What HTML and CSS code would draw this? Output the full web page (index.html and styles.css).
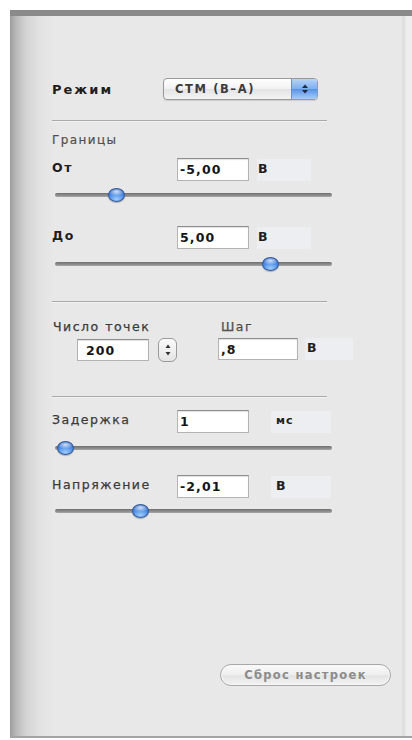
FILE: index.html
```html
<!DOCTYPE html>
<html lang="ru">
<head>
<meta charset="utf-8">
<title>Настройки развёртки</title>
<link rel="stylesheet" href="styles.css">
</head>
<body>
<div class="panel">
  <div class="content">
    <div class="mode-row">
      <span class="label strong">Режим</span>
      <div class="popup">
        <span class="popup-text">СТМ (В–А)</span>
        <span class="popup-arrows">
          <svg width="8" height="12" viewBox="0 0 8 12"><path d="M4 1.5 L7 5 L1 5 Z" fill="#1d2a44"/><path d="M4 10.5 L7 7 L1 7 Z" fill="#1d2a44"/></svg>
        </span>
      </div>
    </div>

    <div class="sep sep-mode"></div>

    <div class="group-title">Границы</div>

    <div class="field-row row-from">
      <span class="label strong">От</span>
      <div class="input">-5,00</div>
      <span class="unit unit-v">В</span>
    </div>
    <div class="slider slider-from"><div class="track"></div><div class="thumb" style="left:22%"></div></div>

    <div class="field-row row-to">
      <span class="label strong">До</span>
      <div class="input">5,00</div>
      <span class="unit unit-v">В</span>
    </div>
    <div class="slider slider-to"><div class="track"></div><div class="thumb" style="left:77.6%"></div></div>

    <div class="sep sep-points"></div>

    <div class="points">
      <div class="points-col count-col">
        <span class="label">Число точек</span>
        <div class="points-inputs">
          <div class="input input-count">200</div>
          <div class="stepper">
            <svg width="8" height="16" viewBox="0 0 8 16"><path d="M4 2.5 L6.5 6 L1.5 6 Z" fill="#333"/><path d="M4 13.5 L6.5 10 L1.5 10 Z" fill="#333"/></svg>
          </div>
        </div>
      </div>
      <div class="points-col step-col">
        <span class="label">Шаг</span>
        <div class="points-inputs">
          <div class="input input-step">,8</div>
          <span class="unit unit-step">В</span>
        </div>
      </div>
    </div>

    <div class="sep sep-delay"></div>

    <div class="field-row row-delay">
      <span class="label">Задержка</span>
      <div class="input">1</div>
      <span class="unit unit-wide">мс</span>
    </div>
    <div class="slider slider-delay"><div class="track"></div><div class="thumb" style="left:3.6%"></div></div>

    <div class="field-row row-volt">
      <span class="label">Напряжение</span>
      <div class="input">-2,01</div>
      <span class="unit unit-wide">В</span>
    </div>
    <div class="slider slider-volt"><div class="track"></div><div class="thumb" style="left:30.7%"></div></div>

    <div class="footer">
      <button class="reset" type="button">Сброс настроек</button>
    </div>
  </div>
</div>
</body>
</html>
```

FILE: styles.css
```css
html, body {
  margin: 0;
  padding: 0;
  background: #ffffff;
}

body {
  font-family: "DejaVu Sans", Verdana, sans-serif;
  color: #222;
}

/* window-like sheet with a dark top rim and shaded left edge */
.panel {
  margin: 10px 0 0 10px;
  height: 728px;
  box-sizing: border-box;
  border-top: 6px solid #8a8a8a;
  border-bottom: 2px solid #a4a4a4;
  background:
    linear-gradient(to right, rgba(0,0,0,0) 0, rgba(0,0,0,0) 392px, rgba(0,0,0,0.05) 393px, rgba(0,0,0,0.02) 395px, rgba(255,255,255,0.25) 396px),
    linear-gradient(to right, #9c9c9c 0, #b9b9b9 6px, #d4d4d4 16px, #e2e2e2 30px, #e8e8e8 44px);
  background-color: #e8e8e8;
  display: flex;
  flex-direction: column;
}

.content {
  flex: 1;
  display: flex;
  flex-direction: column;
  padding: 62px 0 50px 42px;
}

.label {
  font-size: 12.5px;
  letter-spacing: 1.5px;
  color: #3a3a3a;
  white-space: nowrap;
  -webkit-text-stroke: 0.25px #3a3a3a;
}

.label.strong {
  font-weight: bold;
  font-size: 12.5px;
  letter-spacing: 1.5px;
  color: #1e1e1e;
  -webkit-text-stroke: 0;
}

/* mode popup */
.mode-row {
  display: flex;
  align-items: center;
  height: 22px;
}

.mode-row .label {
  width: 111px;
  font-size: 13px;
  letter-spacing: 2px;
}

.popup {
  width: 155px;
  height: 22px;
  box-sizing: border-box;
  border: 1px solid #9a9a9a;
  border-radius: 4px;
  background: linear-gradient(#ffffff, #f1f1f1 50%, #e3e3e3 51%, #f4f4f4);
  display: flex;
  align-items: center;
  overflow: hidden;
  box-shadow: 0 1px 1px rgba(0,0,0,0.12);
}

.popup-text {
  flex: 1;
  padding-left: 11px;
  font-size: 11.5px;
  font-weight: bold;
  letter-spacing: 1.6px;
  color: #3c3c3c;
}

.popup-arrows {
  width: 25px;
  height: 100%;
  display: flex;
  align-items: center;
  justify-content: center;
  border-left: 1px solid #6c8fc4;
  background: linear-gradient(#b6d3f6, #7fb0ee 48%, #5a94e6 52%, #a7cdf8);
}

/* separators */
.sep {
  width: 275px;
  height: 1px;
  background: #a9a9a9;
  border-bottom: 1px solid #f3f3f3;
}

.sep-mode { margin-top: 20px; }
.sep-points { margin-top: 29px; }
.sep-delay { margin-top: 34px; }

.group-title {
  margin-top: 11px;
  font-size: 12px;
  letter-spacing: 1.4px;
  color: #505050;
  line-height: 15px;
  -webkit-text-stroke: 0.2px #505050;
}

/* label / field / unit rows */
.field-row {
  display: grid;
  grid-template-columns: 125px 72px auto;
  align-items: center;
  height: 23px;
}

.field-row .label { align-self: start; padding-top: 2px; }

.row-from { margin-top: 10px; }
.row-to { margin-top: 23px; }
.row-delay { margin-top: 12px; }
.row-volt { margin-top: 19px; }

.input {
  height: 23px;
  box-sizing: border-box;
  background: #ffffff;
  border: 1px solid #b4b4b4;
  border-top-color: #8d8d8d;
  box-shadow: inset 0 1px 1px rgba(0,0,0,0.12);
  padding: 0 0 0 2px;
  font-size: 12.5px;
  font-weight: bold;
  letter-spacing: 1.1px;
  line-height: 21px;
  color: #151515;
}

.unit {
  height: 22px;
  box-sizing: border-box;
  background: #eceef2;
  font-size: 12.5px;
  font-weight: bold;
  color: #1e1e1e;
  line-height: 20px;
  letter-spacing: 1px;
}

.unit-v { width: 54px; margin-left: 8px; padding-left: 1px; }
.unit-wide { width: 60px; margin-left: 22px; padding-left: 5px; }
.row-delay .unit-wide { font-size: 11px; }
.unit-step { width: 48px; margin-left: 7px; padding-left: 2px; }

/* horizontal sliders */
.slider {
  position: relative;
  width: 277px;
  height: 16px;
  margin-left: 3px;
}

.slider-from { margin-top: 6px; }
.slider-to { margin-top: 7px; }
.slider-delay { margin-top: 7px; }
.slider-volt { margin-top: 5px; }

.track {
  position: absolute;
  left: 0;
  right: 0;
  top: 6px;
  height: 4px;
  border-radius: 2px;
  background: linear-gradient(#6f6f6f, #8e8e8e 60%, #a8a8a8);
}

.thumb {
  position: absolute;
  top: 1px;
  width: 17px;
  height: 14px;
  margin-left: -8px;
  box-sizing: border-box;
  border-radius: 50%;
  border: 1px solid #33599c;
  background:
    radial-gradient(ellipse 60% 35% at 50% 22%, rgba(255,255,255,0.8), rgba(255,255,255,0) 100%),
    radial-gradient(ellipse 80% 70% at 50% 85%, #a0cdfb, #468ae6 70%, #2762c4);
  box-shadow: 0 1px 1px rgba(0,0,0,0.25);
}

/* point count and step */
.points {
  margin-top: 16px;
  display: flex;
}

.points-col {
  display: flex;
  flex-direction: column;
}

.count-col { width: 166px; }

.points-col .label { line-height: 15px; padding-left: 1px; }

.points-inputs {
  margin-top: 4px;
  display: flex;
  align-items: center;
}

.input-count {
  width: 72px;
  margin-left: 25px;
  height: 22px;
  padding-left: 8px;
}

.stepper {
  margin-left: 9px;
  width: 19px;
  height: 24px;
  box-sizing: border-box;
  border: 1px solid #9a9a9a;
  border-radius: 6px;
  background: linear-gradient(#fbfbfb, #e4e4e4);
  display: flex;
  align-items: center;
  justify-content: center;
}

.step-col .label { color: #555; padding-left: 3px; }

.input-step {
  width: 80px;
  height: 22px;
}

/* bottom action */
.footer {
  margin-top: auto;
  display: flex;
  padding-left: 168px;
}

.reset {
  width: 171px;
  height: 22px;
  border: 1px solid #a9a9a9;
  border-radius: 11px;
  background: linear-gradient(#fafafa, #eeeeee 50%, #e4e4e4 51%, #f2f2f2);
  box-shadow: inset 0 0 0 1px #f7f7f7;
  font-family: "DejaVu Sans", Verdana, sans-serif;
  font-size: 11.5px;
  font-weight: bold;
  letter-spacing: 1.3px;
  color: #8c8c8c;
  padding: 0;
}
```
